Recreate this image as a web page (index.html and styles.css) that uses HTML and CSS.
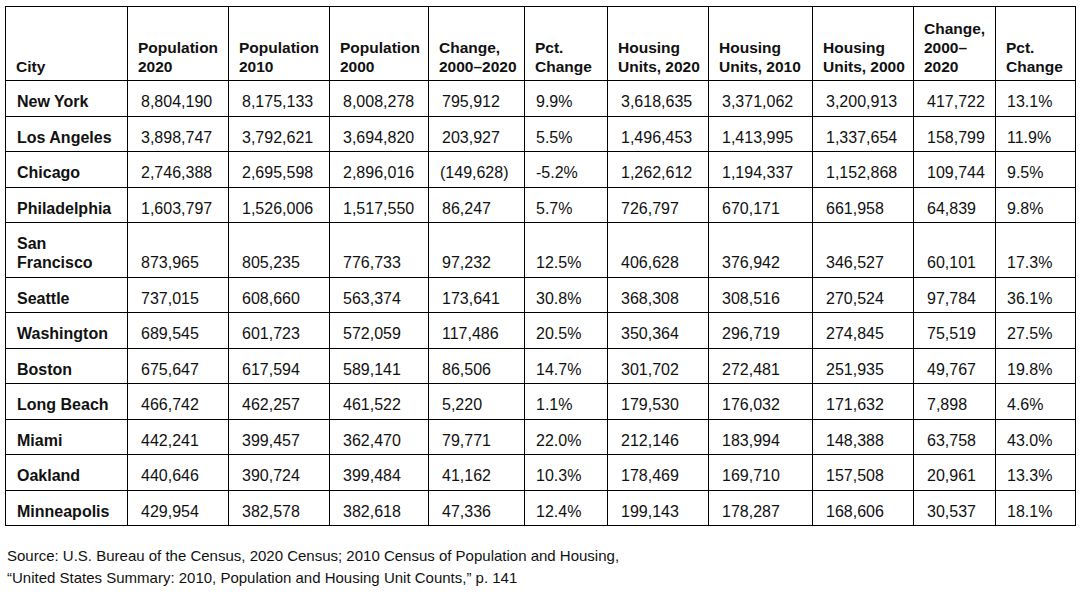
FILE: index.html
```html
<!DOCTYPE html>
<html lang="en">
<head>
<meta charset="utf-8">
<title>City Population and Housing</title>
<link rel="stylesheet" href="styles.css">
</head>
<body>
<table class="data">
  <colgroup>
    <col class="c-city"><col class="c-p"><col class="c-p"><col class="c-p3"><col class="c-ch"><col class="c-pct">
    <col class="c-p"><col class="c-h2"><col class="c-p"><col class="c-ch2"><col class="c-pct2">
  </colgroup>
  <thead>
    <tr>
      <th>City</th>
      <th>Population 2020</th>
      <th>Population 2010</th>
      <th>Population 2000</th>
      <th>Change, 2000–2020</th>
      <th>Pct.<br>Change</th>
      <th>Housing Units, 2020</th>
      <th>Housing Units, 2010</th>
      <th>Housing Units, 2000</th>
      <th>Change, 2000–<br>2020</th>
      <th>Pct.<br>Change</th>
    </tr>
  </thead>
  <tbody>
    <tr><td class="city">New York</td><td class="num">8,804,190</td><td class="num">8,175,133</td><td class="num">8,008,278</td><td class="num">795,912</td><td class="pct">9.9%</td><td class="num">3,618,635</td><td class="num">3,371,062</td><td class="num">3,200,913</td><td class="num">417,722</td><td class="pct">13.1%</td></tr>
    <tr><td class="city">Los Angeles</td><td class="num">3,898,747</td><td class="num">3,792,621</td><td class="num">3,694,820</td><td class="num">203,927</td><td class="pct">5.5%</td><td class="num">1,496,453</td><td class="num">1,413,995</td><td class="num">1,337,654</td><td class="num">158,799</td><td class="pct">11.9%</td></tr>
    <tr><td class="city">Chicago</td><td class="num">2,746,388</td><td class="num">2,695,598</td><td class="num">2,896,016</td><td class="num neg">(149,628)</td><td class="pct">-5.2%</td><td class="num">1,262,612</td><td class="num">1,194,337</td><td class="num">1,152,868</td><td class="num">109,744</td><td class="pct">9.5%</td></tr>
    <tr><td class="city">Philadelphia</td><td class="num">1,603,797</td><td class="num">1,526,006</td><td class="num">1,517,550</td><td class="num">86,247</td><td class="pct">5.7%</td><td class="num">726,797</td><td class="num">670,171</td><td class="num">661,958</td><td class="num">64,839</td><td class="pct">9.8%</td></tr>
    <tr><td class="city">San<br>Francisco</td><td class="num">873,965</td><td class="num">805,235</td><td class="num">776,733</td><td class="num">97,232</td><td class="pct">12.5%</td><td class="num">406,628</td><td class="num">376,942</td><td class="num">346,527</td><td class="num">60,101</td><td class="pct">17.3%</td></tr>
    <tr><td class="city">Seattle</td><td class="num">737,015</td><td class="num">608,660</td><td class="num">563,374</td><td class="num">173,641</td><td class="pct">30.8%</td><td class="num">368,308</td><td class="num">308,516</td><td class="num">270,524</td><td class="num">97,784</td><td class="pct">36.1%</td></tr>
    <tr><td class="city">Washington</td><td class="num">689,545</td><td class="num">601,723</td><td class="num">572,059</td><td class="num">117,486</td><td class="pct">20.5%</td><td class="num">350,364</td><td class="num">296,719</td><td class="num">274,845</td><td class="num">75,519</td><td class="pct">27.5%</td></tr>
    <tr><td class="city">Boston</td><td class="num">675,647</td><td class="num">617,594</td><td class="num">589,141</td><td class="num">86,506</td><td class="pct">14.7%</td><td class="num">301,702</td><td class="num">272,481</td><td class="num">251,935</td><td class="num">49,767</td><td class="pct">19.8%</td></tr>
    <tr><td class="city">Long Beach</td><td class="num">466,742</td><td class="num">462,257</td><td class="num">461,522</td><td class="num">5,220</td><td class="pct">1.1%</td><td class="num">179,530</td><td class="num">176,032</td><td class="num">171,632</td><td class="num">7,898</td><td class="pct">4.6%</td></tr>
    <tr><td class="city">Miami</td><td class="num">442,241</td><td class="num">399,457</td><td class="num">362,470</td><td class="num">79,771</td><td class="pct">22.0%</td><td class="num">212,146</td><td class="num">183,994</td><td class="num">148,388</td><td class="num">63,758</td><td class="pct">43.0%</td></tr>
    <tr><td class="city">Oakland</td><td class="num">440,646</td><td class="num">390,724</td><td class="num">399,484</td><td class="num">41,162</td><td class="pct">10.3%</td><td class="num">178,469</td><td class="num">169,710</td><td class="num">157,508</td><td class="num">20,961</td><td class="pct">13.3%</td></tr>
    <tr><td class="city">Minneapolis</td><td class="num">429,954</td><td class="num">382,578</td><td class="num">382,618</td><td class="num">47,336</td><td class="pct">12.4%</td><td class="num">199,143</td><td class="num">178,287</td><td class="num">168,606</td><td class="num">30,537</td><td class="pct">18.1%</td></tr>
  </tbody>
</table>
<p class="source">Source: U.S. Bureau of the Census, 2020 Census; 2010 Census of Population and Housing,<br>“United States Summary: 2010, Population and Housing Unit Counts,” p. 141</p>
</body>
</html>
```

FILE: styles.css
```css
html, body {
  margin: 0;
  background: #ffffff;
}
body {
  padding: 6px 0 0 5px;
  font-family: "Liberation Sans", Arial, Helvetica, sans-serif;
  color: #111111;
}
.data {
  border-collapse: collapse;
  table-layout: fixed;
  width: 1071px;
  font-size: 16px;
  line-height: 19px;
}
.c-city { width: 122px; }
.c-p { width: 101px; }
.c-p3 { width: 99px; }
.c-ch { width: 96px; }
.c-pct { width: 83px; }
.c-h2 { width: 104px; }
.c-ch2 { width: 82px; }
.c-pct2 { width: 80px; }
.data th,
.data td {
  border: 1px solid #000000;
  vertical-align: bottom;
  text-align: left;
}
.data th {
  font-weight: bold;
  font-size: 15.5px;
  padding: 8px 6px 4px 10px;
  height: 74px;
  box-sizing: border-box;
}
.data td {
  padding: 11px 4px 4.5px 13px;
}
.data td.city {
  font-weight: bold;
  padding-left: 11px;
}
.data td.pct {
  padding-left: 11px;
}
.data td.neg {
  padding-left: 11px;
}
.source {
  margin: 19px 0 0 2px;
  font-size: 15px;
  line-height: 22px;
}
```
